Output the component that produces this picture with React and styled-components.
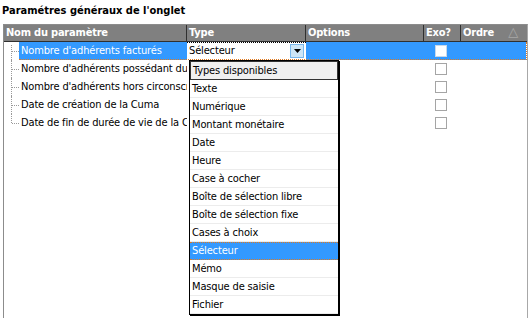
import React from "react";
import styled, { createGlobalStyle } from "styled-components";

const Global = createGlobalStyle`
  html, body { margin: 0; padding: 0; background: #fff; }
  body { font-family: Tahoma, "DejaVu Sans Condensed", "Liberation Sans", sans-serif; font-size: 11px; color: #000; letter-spacing: -0.15px; }
`;

const COLS = "183px 119px 118px 37px 65px";

const Page = styled.div`
  width: 529px;
  height: 318px;
  overflow: hidden;
  display: flex;
  flex-direction: column;
`;

const Title = styled.div`
  font-family: "DejaVu Sans Condensed", sans-serif;
  font-weight: bold;
  font-size: 11px;
  letter-spacing: 0;
  height: 24px;
  line-height: 22px;
  padding-left: 2px;
  box-sizing: border-box;
`;

const Panel = styled.div`
  position: relative;
  flex: 1;
  margin-left: 3px;
  width: 523px;
  border-left: 1px solid #8c8c8c;
  border-right: 1px solid #a8a8a8;
  border-top: 1px solid #8c8c8c;
`;

const HeaderRow = styled.div`
  display: grid;
  grid-template-columns: ${COLS};
  height: 16px;
  background: #808080;
  border-bottom: 1px solid #303030;
`;

const HeadCell = styled.div`
  position: relative;
  font-family: "DejaVu Sans Condensed", sans-serif;
  font-weight: bold;
  color: #fff;
  font-size: 11px;
  letter-spacing: -0.2px;
  line-height: 16px;
  padding-left: 2px;
  border-right: ${(p) => (p.$last ? "none" : "1px solid #303030")};
  white-space: nowrap;
  overflow: hidden;
`;

const SortMark = styled.span`
  position: absolute;
  right: 8px;
  top: -1px;
  color: #a8a8a8;
  font-weight: normal;
  font-size: 13px;
  font-family: "DejaVu Sans", sans-serif;
`;

const Row = styled.div`
  position: relative;
  display: grid;
  grid-template-columns: ${COLS};
  height: 18px;
`;

const NameCell = styled.div`
  display: flex;
  height: 18px;
`;

const Gutter = styled.div`
  position: relative;
  width: 15px;
  flex: none;
  &::before {
    content: "";
    position: absolute;
    left: 7px;
    top: ${(p) => (p.$first ? "3px" : "0")};
    height: ${(p) => (p.$last ? "9px" : p.$first ? "15px" : "18px")};
    border-left: 1px dotted #9a9a9a;
  }
  &::after {
    content: "";
    position: absolute;
    left: 8px;
    top: 9px;
    width: 7px;
    border-top: 1px dotted #9a9a9a;
  }
`;

const NameText = styled.div`
  flex: 1;
  padding-left: 2px;
  line-height: 18px;
  white-space: nowrap;
  overflow: hidden;
  background: ${(p) => (p.$sel ? "#3399ff" : "transparent")};
  color: ${(p) => (p.$sel ? "#fff" : "#000")};
`;

const Cell = styled.div`
  background: ${(p) => (p.$sel ? "#3399ff" : "transparent")};
  display: flex;
  align-items: center;
  padding-left: ${(p) => (p.$box ? "11px" : "0")};
`;

const EditCell = styled.div`
  position: relative;
  background: #fff;
  padding-left: 2px;
  border-top: 1px dotted #000;
  box-sizing: border-box;
  line-height: 16px;
`;

const DropBtn = styled.div`
  position: absolute;
  right: 2px;
  top: 1px;
  width: 14px;
  height: 14px;
  box-sizing: border-box;
  background: #cde6f7;
  border: 1px solid #7ab8ec;
  display: flex;
  align-items: center;
  justify-content: center;
`;

const Box = styled.div`
  width: 12px;
  height: 12px;
  box-sizing: border-box;
  background: #fff;
  border: 1px solid ${(p) => (p.$sel ? "#c8d8ea" : "#a5a5a5")};
`;

const Focus = styled.div`
  position: absolute;
  left: 15px;
  right: 0;
  top: 0;
  bottom: 0;
  border: 1px dotted #e07a20;
  border-left: none;
  border-top: none;
  pointer-events: none;
`;

const List = styled.div`
  position: absolute;
  left: 185px;
  top: 35px;
  width: 148px;
  background: #fff;
  border: 1px solid #000;
  box-shadow: 1px 1px 0 #000;
  display: flex;
  flex-direction: column;
`;

const Item = styled.div`
  height: ${(p) => (p.$head ? "19px" : "18px")};
  box-sizing: border-box;
  line-height: 17px;
  padding-left: 2px;
  white-space: nowrap;
  border-bottom: 1px solid #ececec;
  background: ${(p) => (p.$head ? "#f0f0f0" : p.$sel ? "#3399ff" : "#fff")};
  color: ${(p) => (p.$sel ? "#fff" : "#000")};
  ${(p) => p.$head && "border: 1px solid #333; line-height: 17px;"}
  ${(p) => p.$sel && "border-top: 1px dotted #e07a20; border-bottom: 1px dotted #e07a20; line-height: 16px;"}
`;

const names = [
  "Nombre d'adhérents facturés",
  "Nombre d'adhérents possédant du",
  "Nombre d'adhérents hors circonscri",
  "Date de création de la Cuma",
  "Date de fin de durée de vie de la C",
];

const types = [
  "Texte",
  "Numérique",
  "Montant monétaire",
  "Date",
  "Heure",
  "Case à cocher",
  "Boîte de sélection libre",
  "Boîte de sélection fixe",
  "Cases à choix",
  "Sélecteur",
  "Mémo",
  "Masque de saisie",
  "Fichier",
];

export default function App() {
  return (
    <Page>
      <Global />
      <Title>Paramétres généraux de l'onglet</Title>
      <Panel>
        <HeaderRow>
          <HeadCell>Nom du paramètre</HeadCell>
          <HeadCell>Type</HeadCell>
          <HeadCell>Options</HeadCell>
          <HeadCell>Exo?</HeadCell>
          <HeadCell $last>
            Ordre<SortMark>△</SortMark>
          </HeadCell>
        </HeaderRow>
        {names.map((n, i) => {
          const sel = i === 0;
          return (
            <Row key={n}>
              <NameCell>
                <Gutter $first={i === 0} $last={i === names.length - 1} />
                <NameText $sel={sel}>{n}</NameText>
              </NameCell>
              {sel ? (
                <EditCell>
                  Sélecteur
                  <DropBtn>
                    <svg width="7" height="4" viewBox="0 0 7 4">
                      <path d="M0 0 H7 L3.5 4 Z" fill="#000" />
                    </svg>
                  </DropBtn>
                </EditCell>
              ) : (
                <Cell />
              )}
              <Cell $sel={sel} />
              <Cell $sel={sel} $box>
                <Box $sel={sel} />
              </Cell>
              <Cell $sel={sel} />
              {sel && <Focus />}
            </Row>
          );
        })}
        <List>
          <Item $head>Types disponibles</Item>
          {types.map((t) => (
            <Item key={t} $sel={t === "Sélecteur"}>
              {t}
            </Item>
          ))}
        </List>
      </Panel>
    </Page>
  );
}
